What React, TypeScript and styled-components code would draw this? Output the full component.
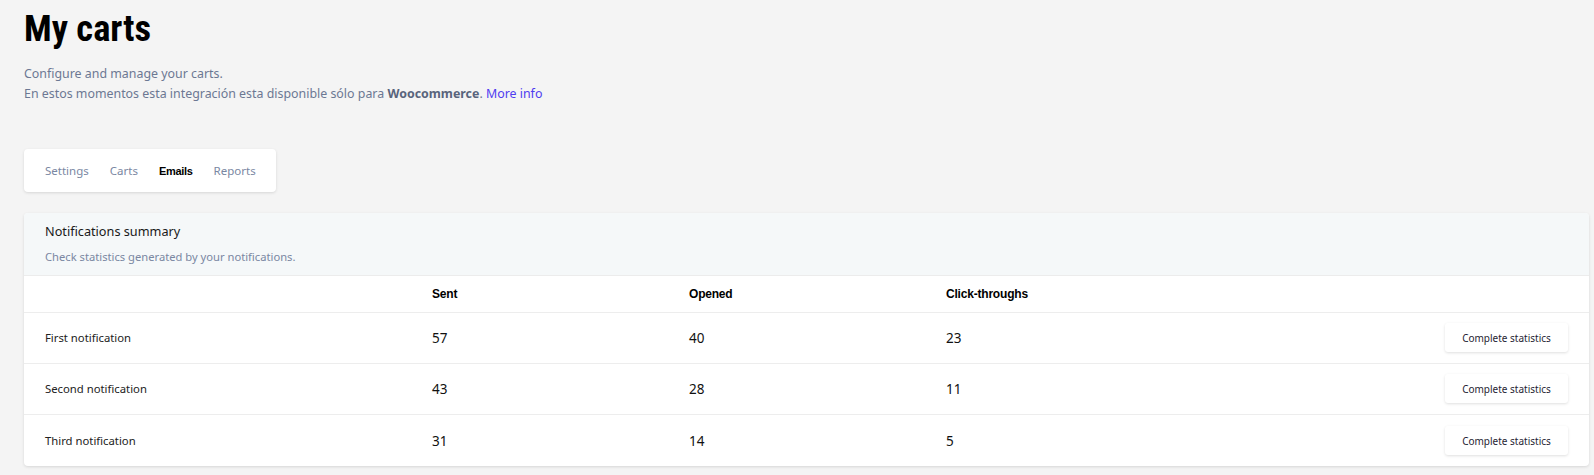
import React from "react";
import styled, { createGlobalStyle } from "styled-components";

const Global = createGlobalStyle`
  html, body { margin: 0; padding: 0; background: #f4f4f4; }
  body { font-family: "Noto Sans", "Liberation Sans", sans-serif; color: #1c1c1c; }
  * { box-sizing: border-box; }
`;

const Page = styled.div`
  padding: 9px 5px 9px 24px;
  display: flex;
  flex-direction: column;
`;

const Title = styled.h1`
  margin: 0;
  font-family: "Liberation Sans Narrow", "Roboto Condensed", "Arial Narrow", "Liberation Sans", sans-serif;
  font-weight: 700;
  font-size: 36.5px;
  line-height: 40px;
  letter-spacing: 0;
  color: #000;
`;

const Intro = styled.div`
  margin-top: 15px;
  font-size: 12.4px;
  line-height: 19.5px;
  color: #6c7893;
`;

const Strong = styled.b`
  font-weight: 700;
  color: #59647c;
`;

const Link = styled.a`
  color: #4f3cf0;
  text-decoration: none;
`;

const Tabs = styled.nav`
  margin-top: 46px;
  align-self: flex-start;
  display: flex;
  align-items: center;
  gap: 21px;
  height: 43px;
  padding: 0 20px 0 21px;
  background: #fff;
  border-radius: 4px;
  box-shadow: 0 1px 3px rgba(0, 0, 0, 0.12);
`;

const Tab = styled.span<{ $active?: boolean }>`
  font-size: ${(p) => (p.$active ? "11px" : "11.5px")};
  font-family: ${(p) =>
    p.$active
      ? `"Liberation Sans Narrow", "Liberation Sans", sans-serif`
      : `"Noto Sans", "Liberation Sans", sans-serif`};
  font-weight: ${(p) => (p.$active ? 700 : 400)};
  letter-spacing: ${(p) => (p.$active ? "-0.3px" : "0")};
  color: ${(p) => (p.$active ? "#000" : "#7a87a2")};
`;

const Card = styled.section`
  margin-top: 21px;
  background: #fff;
  border-radius: 4px;
  box-shadow: 0 1px 3px rgba(0, 0, 0, 0.12);
  overflow: hidden;
`;

const CardHead = styled.header`
  background: #f5f8f9;
  height: 63px;
  padding: 8px 21px 0;
  border-bottom: 1px solid #ececec;
  display: flex;
  flex-direction: column;
`;

const CardTitle = styled.div`
  font-size: 12.7px;
  line-height: 20px;
  color: #1a1a1a;
`;

const CardSub = styled.div`
  margin-top: 8px;
  font-size: 11.2px;
  line-height: 16px;
  color: #7a87a2;
`;

const Row = styled.div<{ $head?: boolean }>`
  display: grid;
  grid-template-columns: 387px 257px 257px 257px 1fr;
  align-items: center;
  height: ${(p) => (p.$head ? "36.5px" : "51.3px")};
  padding: 0 21px;
  border-bottom: 1px solid #ededed;
  &:last-child { border-bottom: none; }
`;

const ColHead = styled.div`
  font-family: "Liberation Sans Narrow", "Liberation Sans", sans-serif;
  font-weight: 700;
  font-size: 12px;
  letter-spacing: -0.2px;
  color: #000;
`;

const Label = styled.div`
  font-size: 11.3px;
  color: #222;
`;

const Num = styled.div`
  font-size: 13.5px;
  color: #111;
`;

const Actions = styled.div`
  display: flex;
  justify-content: flex-end;
`;

const Button = styled.button`
  height: 29px;
  width: 123px;
  border: none;
  background: #fff;
  border-radius: 3px;
  box-shadow: 0 1px 3px rgba(0, 0, 0, 0.13);
  font-family: "Noto Sans", "Liberation Sans", sans-serif;
  font-size: 10px;
  color: #1f2433;
  cursor: pointer;
  padding: 0;
`;

const rows = [
  { name: "First notification", sent: 57, opened: 40, clicks: 23 },
  { name: "Second notification", sent: 43, opened: 28, clicks: 11 },
  { name: "Third notification", sent: 31, opened: 14, clicks: 5 },
];

export default function App() {
  return (
    <>
      <Global />
      <Page>
        <Title>My carts</Title>
        <Intro>
          <div>Configure and manage your carts.</div>
          <div>
            En estos momentos esta integración esta disponible sólo para{" "}
            <Strong>Woocommerce</Strong>. <Link href="#">More info</Link>
          </div>
        </Intro>
        <Tabs>
          <Tab>Settings</Tab>
          <Tab>Carts</Tab>
          <Tab $active>Emails</Tab>
          <Tab>Reports</Tab>
        </Tabs>
        <Card>
          <CardHead>
            <CardTitle>Notifications summary</CardTitle>
            <CardSub>Check statistics generated by your notifications.</CardSub>
          </CardHead>
          <Row $head>
            <div />
            <ColHead>Sent</ColHead>
            <ColHead>Opened</ColHead>
            <ColHead>Click-throughs</ColHead>
            <div />
          </Row>
          {rows.map((r) => (
            <Row key={r.name}>
              <Label>{r.name}</Label>
              <Num>{r.sent}</Num>
              <Num>{r.opened}</Num>
              <Num>{r.clicks}</Num>
              <Actions>
                <Button>Complete statistics</Button>
              </Actions>
            </Row>
          ))}
        </Card>
      </Page>
    </>
  );
}
